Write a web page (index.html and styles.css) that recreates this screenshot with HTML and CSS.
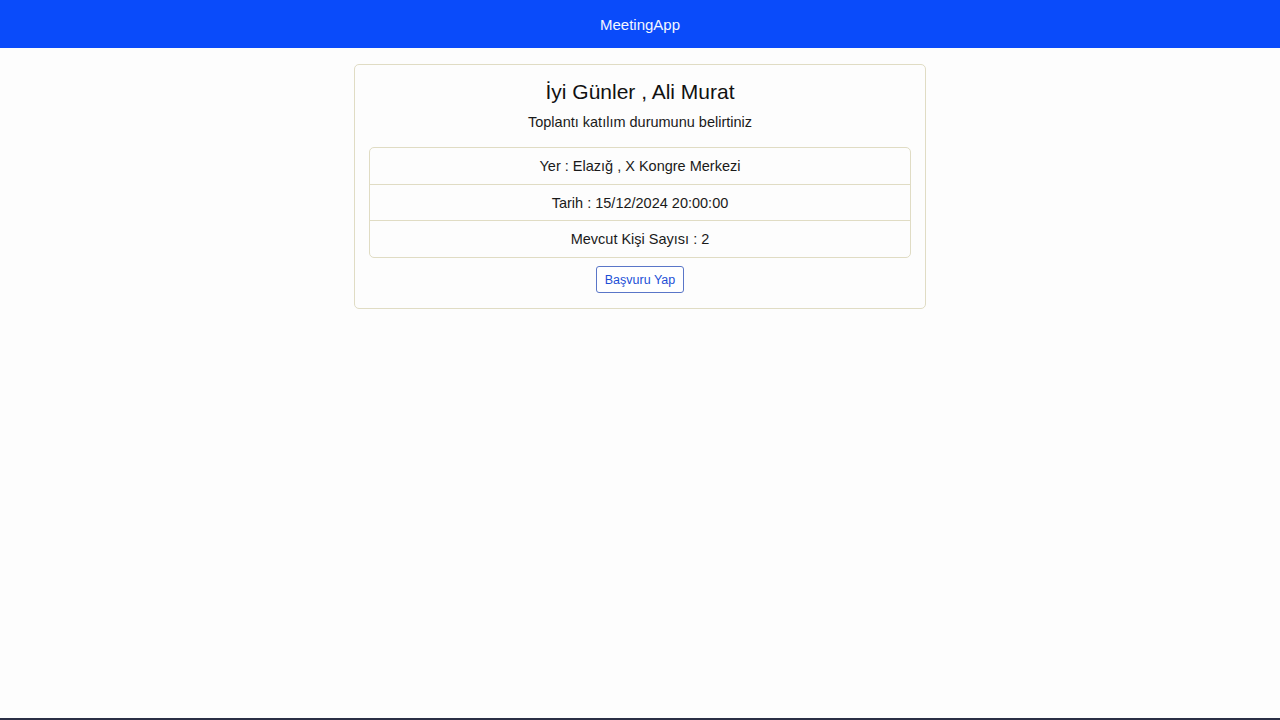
FILE: index.html
```html
<!DOCTYPE html>
<html lang="tr">
<head>
<meta charset="utf-8">
<title>MeetingApp</title>
<link rel="stylesheet" href="styles.css">
</head>
<body>
<nav class="navbar"><span class="brand">MeetingApp</span></nav>
<main class="page">
  <section class="card">
    <h1 class="title">İyi Günler , Ali Murat</h1>
    <p class="subtitle">Toplantı katılım durumunu belirtiniz</p>
    <ul class="list">
      <li class="item">Yer : Elazığ , X Kongre Merkezi</li>
      <li class="item">Tarih : 15/12/2024 20:00:00</li>
      <li class="item">Mevcut Kişi Sayısı : 2</li>
    </ul>
    <div class="actions"><button class="btn">Başvuru Yap</button></div>
  </section>
</main>
</body>
</html>
```
FILE: styles.css
```css
* { box-sizing: border-box; }
html, body { margin: 0; padding: 0; }
body {
  font-family: "Liberation Sans", Arial, sans-serif;
  color: #1a1a1a;
  background: #fdfdfd;
  height: 720px;
  border-bottom: 2px solid #2a2f45;
}
.navbar {
  height: 48px;
  background: #0a4bfa;
  display: flex;
  align-items: center;
  justify-content: center;
}
.brand { color: #f4f6ff; font-size: 15px; }
.page {
  display: flex;
  justify-content: center;
  padding-top: 16px;
}
.card {
  width: 572px;
  border: 1px solid #e0dcc4;
  border-radius: 5px;
  padding: 13px 14px 15px;
  text-align: center;
}
.title {
  margin: 0;
  font-size: 21px;
  font-weight: 400;
  line-height: 28px;
  color: #111;
}
.subtitle {
  margin: 5px 0 0;
  font-size: 14.5px;
  line-height: 22px;
}
.list {
  list-style: none;
  margin: 14px 0 0;
  padding: 0 0 1px;
  border: 1px solid #e0dcc4;
  border-radius: 5px;
}
.item {
  height: 36px;
  display: flex;
  align-items: center;
  justify-content: center;
  font-size: 14.5px;
}
.item + .item { border-top: 1px solid #e0dcc4; }
.actions { margin-top: 8px; display: flex; justify-content: center; }
.btn {
  font-family: inherit;
  font-size: 12.5px;
  color: #1d4fd6;
  background: #fff;
  border: 1px solid #5a76c8;
  border-radius: 3px;
  height: 27px;
  padding: 0 8px;
}
```
